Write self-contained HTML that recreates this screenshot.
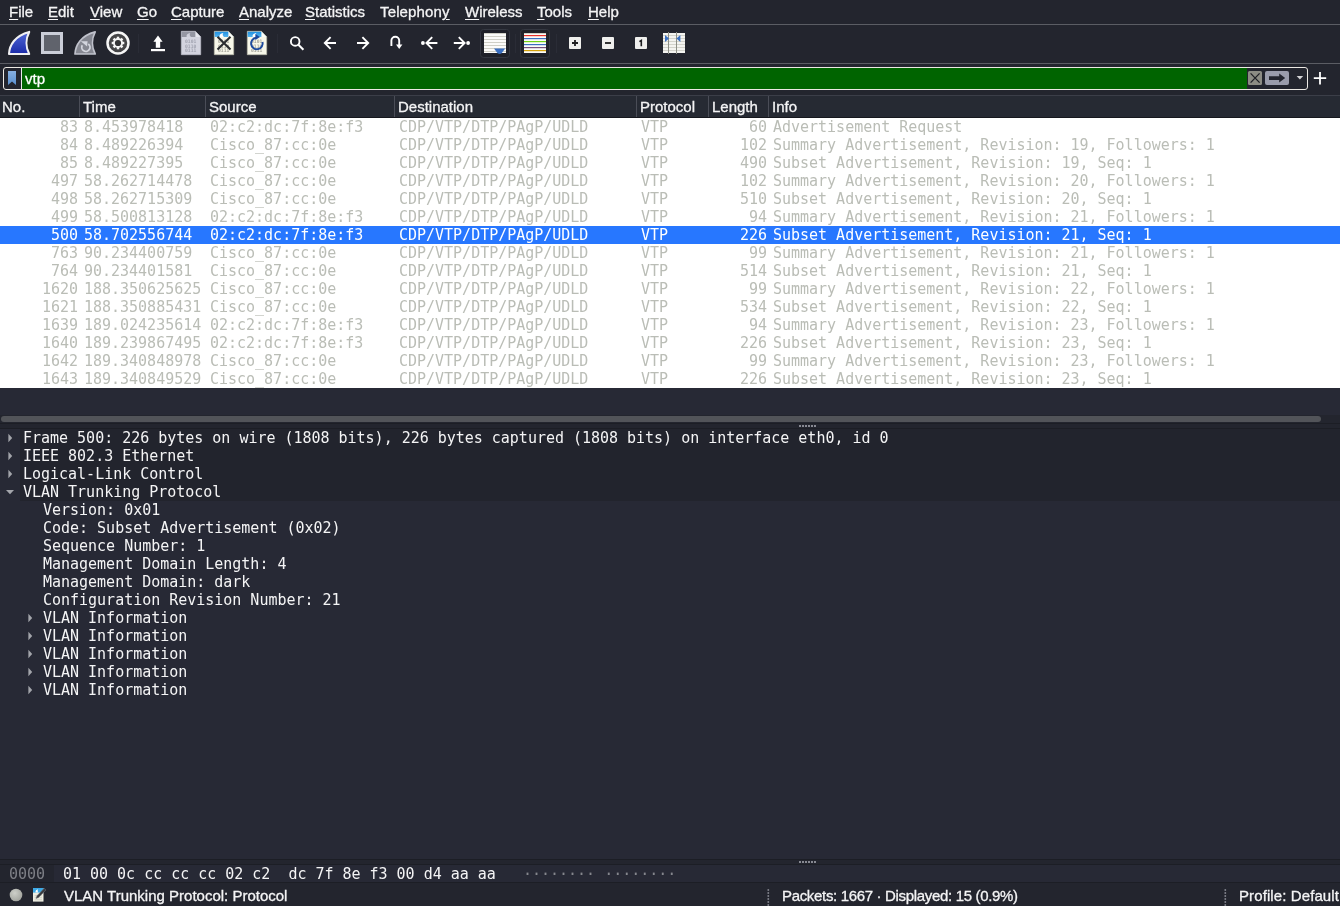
<!DOCTYPE html>
<html lang="en">
<head>
<meta charset="utf-8">
<title>Wireshark</title>
<style>
*{box-sizing:border-box;margin:0;padding:0}
html,body{width:1340px;height:906px;overflow:hidden;background:#23252e}
body{position:relative;font-family:"Liberation Sans","DejaVu Sans",sans-serif;font-size:15px;color:#fff}
.abs{position:absolute}
.mi,#phead span,#status span,#filter .txt{-webkit-text-stroke:0.3px currentColor}
#menubar,#toolbar,#filter,#phead,#plist,#tree,#hex,#status{will-change:transform}
#menubar{position:absolute;left:0;top:0;width:1340px;height:24px;background:#23252e}
.mi{position:absolute;top:3px;line-height:18px;font-size:15px;color:#f4f4f5;white-space:pre}
.mi u{text-decoration:underline;text-underline-offset:2px;text-decoration-thickness:1.4px}
.hl{position:absolute;left:0;width:1340px;height:1px;background:#5b5d64}
#toolbar{position:absolute;left:0;top:25px;width:1340px;height:38px}
#toolbar svg{position:absolute}
#filter{position:absolute;left:3px;top:67px;width:1305px;height:23px;border:1px solid #ece9e4;border-radius:3px;background:#23252e;overflow:hidden}
#filter .green{position:absolute;left:18px;top:0;width:1225px;height:21px;background:#006400}
#filter .vsep{position:absolute;left:17px;top:0;width:1px;height:21px;background:#e9e9ea}
#filter .txt{position:absolute;left:21px;top:1px;line-height:19px;font-size:15px;color:#fff}
#phead{position:absolute;left:0;top:95px;width:1340px;height:23px;background:#262a33;border-top:1px solid #3b3e48;border-bottom:1px solid #16181e}
#phead span{position:absolute;top:1px;line-height:19px;font-size:15px;color:#f4f4f5}
#phead i{position:absolute;top:0;width:1px;height:21px;background:#4a4d57}
#plist{position:absolute;left:0;top:118px;width:1340px;height:270px;background:#fff;overflow:hidden}
.mono{font-family:"DejaVu Sans Mono","Liberation Mono",monospace;font-size:15px;letter-spacing:-0.015px}
.pr{position:absolute;left:0;width:1340px;height:18px;color:#babdb6}
.pr.sel{background:#2777ff;color:#fff}
.c{position:absolute;top:0;line-height:18px;white-space:pre}
.no{right:1262px}.tm{left:84px}.src{left:210px}.dst{left:399px}.pro{left:641px}.len{right:573px}.inf{left:773px}
#gap{position:absolute;left:0;top:388px;width:1340px;height:40px;background:#272935}
#hscroll{position:absolute;left:0;top:415px;width:1340px;height:13px;background:#23252e}
#hscroll b{position:absolute;left:0;top:8px;width:1340px;height:1px;background:#1c1e25}
#hscroll i{position:absolute;left:1px;top:1px;width:1320px;height:6px;border-radius:3px;background:#525459}
#tree{position:absolute;left:0;top:428px;width:1340px;height:432px;border-bottom:1px solid #1c1e25;background:#272935;overflow:hidden;border-top:1px solid #1c1e25}
.tr{position:absolute;left:0;width:1340px;height:18px}
.tr .pbg{position:absolute;left:20px;top:0;width:1320px;height:18px;background:#22242d}
.tt{position:absolute;top:0;line-height:18px;white-space:pre;color:#f4f4f5}
.ar{position:absolute;top:4px}
#hex{position:absolute;left:0;top:864px;width:1340px;height:19px;background:#272935;border-top:1px solid #1c1e25;border-bottom:1px solid #1c1e25}
#hex i{position:absolute;left:0;top:0;width:54px;height:17px;background:#23252e}
#hex span{position:absolute;top:0;line-height:19px;white-space:pre}
#status{position:absolute;left:0;top:884px;width:1340px;height:22px;background:#23252e}
#status span{position:absolute;top:2px;line-height:20px;font-size:15px;color:#f4f4f5;white-space:pre}
</style>
</head>
<body>
<div id="menubar"><span class="mi" style="left:9px"><u>F</u>ile</span><span class="mi" style="left:48px"><u>E</u>dit</span><span class="mi" style="left:90px"><u>V</u>iew</span><span class="mi" style="left:137px"><u>G</u>o</span><span class="mi" style="left:171px"><u>C</u>apture</span><span class="mi" style="left:239px"><u>A</u>nalyze</span><span class="mi" style="left:305px"><u>S</u>tatistics</span><span class="mi" style="left:380px;letter-spacing:0.15px">Telephon<u>y</u></span><span class="mi" style="left:465px"><u>W</u>ireless</span><span class="mi" style="left:537px"><u>T</u>ools</span><span class="mi" style="left:588px"><u>H</u>elp</span></div>
<div class="hl" style="top:24px"></div>
<div id="toolbar">
<svg style="left:0;top:0" width="1340" height="38" viewBox="0 25 1340 38">
<defs>
<linearGradient id="gfin" x1="0" y1="0" x2="0" y2="1"><stop offset="0" stop-color="#5068d8"/><stop offset="1" stop-color="#1a2aa8"/></linearGradient>
<linearGradient id="gbm" x1="0" y1="0" x2="0" y2="1"><stop offset="0" stop-color="#86afe0"/><stop offset="1" stop-color="#5a90cf"/></linearGradient>
<linearGradient id="gband" x1="0" y1="0" x2="0" y2="1"><stop offset="0" stop-color="#1f90e2"/><stop offset="1" stop-color="#55b4ee"/></linearGradient>
</defs>
<!-- separators -->
<g fill="#2a2c36"><rect x="138" y="34" width="1" height="19"/><rect x="277" y="34" width="1" height="19"/><rect x="515" y="34" width="1" height="19"/><rect x="556" y="34" width="1" height="19"/></g>
<!-- start capture fin -->
<path d="M9 54 C9.4 45 15 35.6 29.2 31.9 C25.6 38.8 25.7 47.4 29.2 54 Z" fill="url(#gfin)" stroke="#f0f0f3" stroke-width="2.1" stroke-linejoin="round"/>
<!-- stop -->
<rect x="42.5" y="33.5" width="19" height="19" fill="#60636c" stroke="#cbced8" stroke-width="3"/>
<!-- restart fin -->
<path d="M75 54 C75.4 45 81 35.6 95.2 31.9 C91.6 38.8 91.7 47.4 95.2 54 Z" fill="#858791" stroke="#c0c2cc" stroke-width="1.7" stroke-linejoin="round"/>
<path d="M88.3 44 A4.1 4.1 0 1 1 82.3 45.3" fill="none" stroke="#d3d5de" stroke-width="1.8"/>
<path d="M80.8 41.2 L87.6 41.2 L87.1 46.6 Z" fill="#d3d5de"/>
<!-- options -->
<circle cx="118" cy="43" r="10.5" fill="#454547" stroke="#f6f6f6" stroke-width="2.5"/>
<g fill="#f6f6f6" transform="translate(118 43)">
<circle r="4.9"/>
<g id="teeth"><rect x="-1.2" y="-6.3" width="2.4" height="12.6"/><rect x="-6.3" y="-1.2" width="12.6" height="2.4"/></g>
<use href="#teeth" transform="rotate(45)"/>
<circle r="3.1" fill="#343436"/>
</g>
<!-- open (upload) -->
<path d="M158 35.6 L162.6 41.8 L160.2 41.8 L160.2 47.8 L155.8 47.8 L155.8 41.8 L153.4 41.8 Z" fill="#fff"/>
<rect x="151" y="49" width="14" height="2.2" fill="#fff"/>
<!-- save (disabled) -->
<path d="M181.3 31.3 L195.4 31.3 L200.7 36.8 L200.7 54.7 L181.3 54.7 Z" fill="#d3d4df" stroke="#bfc0cc" stroke-width="0.7"/>
<path d="M181.7 31.7 L195.2 31.7 L200.3 36.9 L181.7 36.9 Z" fill="#9496a2"/>
<path d="M195.4 31.4 L200.6 36.9 L195.4 36.9 Z" fill="#e6e7ee"/>
<path d="M186.6 36.9 C186.2 34.6 187.6 33.4 190.4 33 C189.2 34.4 189.6 35.8 191 36.9 Z" fill="#cfd0db"/>
<g font-family="'DejaVu Sans Mono','Liberation Mono',monospace" font-size="4.7" fill="#a2a4b1" text-anchor="middle" font-weight="bold"><text x="190.7" y="43.4">0101</text><text x="190.7" y="47.7">0110</text><text x="190.7" y="52">0111</text></g>
<!-- close file -->
<path d="M214.3 31.3 L228.4 31.3 L233.7 36.8 L233.7 54.7 L214.3 54.7 Z" fill="#f7f7e9" stroke="#b9b9a9" stroke-width="0.7"/>
<path d="M214.7 31.7 L228.2 31.7 L233.3 36.9 L214.7 36.9 Z" fill="url(#gband)"/>
<path d="M228.4 31.4 L233.6 36.9 L228.4 36.9 Z" fill="#fdfdf6"/>
<path d="M219.6 36.9 C219.2 34.6 220.6 33.4 223.4 33 C222.2 34.4 222.6 35.8 224 36.9 Z" fill="#ffffff"/>
<g font-family="'DejaVu Sans Mono','Liberation Mono',monospace" font-size="4.7" fill="#a4a49a" text-anchor="middle" font-weight="bold"><text x="223.7" y="43.4">0101</text><text x="223.7" y="47.7">0110</text><text x="223.7" y="52">0111</text></g>
<path d="M217.5 36.7 L230.5 49.5 M230.5 36.7 L217.5 49.5" stroke="#2a2d30" stroke-width="2" fill="none"/>
<!-- reload file -->
<path d="M247.3 31.3 L261.4 31.3 L266.7 36.8 L266.7 54.7 L247.3 54.7 Z" fill="#f7f7e9" stroke="#b9b9a9" stroke-width="0.7"/>
<path d="M247.7 31.7 L261.2 31.7 L266.3 36.9 L247.7 36.9 Z" fill="url(#gband)"/>
<path d="M261.4 31.4 L266.6 36.9 L261.4 36.9 Z" fill="#fdfdf6"/>
<path d="M252.6 36.9 C252.2 34.6 253.6 33.4 256.4 33 C255.2 34.4 255.6 35.8 257 36.9 Z" fill="#ffffff"/>
<g font-family="'DejaVu Sans Mono','Liberation Mono',monospace" font-size="4.7" fill="#a4a49a" text-anchor="middle" font-weight="bold"><text x="256.7" y="43.4">0101</text><text x="256.7" y="47.7">0110</text><text x="256.7" y="52">0111</text></g>
<path d="M262.5 42 A5.8 5.8 0 1 1 256.2 37.7" fill="none" stroke="#1c4a9e" stroke-width="2"/>
<path d="M255.4 34 L260 37 L255.4 40 Z" fill="#1c4a9e"/>
<!-- find -->
<circle cx="295.2" cy="41.4" r="4.3" fill="none" stroke="#fff" stroke-width="1.9"/>
<path d="M298.4 44.8 L303.4 49.8" stroke="#fff" stroke-width="2" fill="none"/>
<!-- back -->
<path d="M336 43 L325.4 43 M330.6 37.2 L324.8 43 L330.6 48.8" stroke="#fff" stroke-width="1.9" fill="none"/>
<!-- forward -->
<path d="M357 43 L367.6 43 M362.4 37.2 L368.2 43 L362.4 48.8" stroke="#fff" stroke-width="1.9" fill="none"/>
<!-- goto -->
<path d="M391.4 46 L391.4 40.6 A3.9 3.9 0 0 1 399.2 40.6 L399.2 45.4" stroke="#fff" stroke-width="1.9" fill="none"/>
<path d="M396 44.4 L402.4 44.4 L399.2 48.9 Z" fill="#fff"/>
<!-- first -->
<circle cx="422.9" cy="43" r="1.9" fill="#fff"/>
<path d="M437.4 43 L427.2 43 M432.2 37.2 L426.4 43 L432.2 48.8" stroke="#fff" stroke-width="1.9" fill="none"/>
<!-- last -->
<circle cx="468.1" cy="43" r="1.9" fill="#fff"/>
<path d="M453.8 43 L463.8 43 M458.8 37.2 L464.6 43 L458.8 48.8" stroke="#fff" stroke-width="1.9" fill="none"/>
<!-- autoscroll (checked) -->
<rect x="480.5" y="29.5" width="29" height="28" rx="3" fill="#1f2129" stroke="#343741"/>
<rect x="484" y="33" width="22" height="20" fill="#fbfbf9"/>
<g fill="#cfcfc6"><rect x="484" y="33" width="22" height="1"/><rect x="484" y="36" width="22" height="1"/><rect x="484" y="39" width="22" height="1"/><rect x="484" y="42" width="22" height="1"/><rect x="484" y="45" width="22" height="1"/><rect x="484" y="48" width="22" height="1"/><rect x="484" y="51" width="22" height="1"/></g>
<path d="M494 48.6 L505.2 48.6 L501.6 53.2 Q499.6 54.6 497.6 53.2 Z" fill="#3a6fc0"/>
<!-- colorize (checked) -->
<rect x="520.5" y="29.5" width="29" height="28" rx="3" fill="#1f2129" stroke="#343741"/>
<rect x="524" y="33" width="22" height="20" fill="#fbfbf9"/>
<rect x="524" y="33" width="22" height="1" fill="#cfcfc6"/>
<rect x="524" y="35" width="22" height="1.2" fill="#e8322c"/>
<rect x="524" y="38" width="22" height="1.2" fill="#3a6fc0"/>
<rect x="524" y="41" width="22" height="1.2" fill="#73d216"/>
<rect x="524" y="44" width="22" height="1.2" fill="#3a6fc0"/>
<rect x="524" y="47" width="22" height="1.2" fill="#75507b"/>
<rect x="524" y="50" width="22" height="1.2" fill="#d4a20c"/>
<!-- zoom in -->
<rect x="569" y="37" width="12" height="12" rx="1" fill="#efefed"/>
<path d="M575 40 L575 46 M572 43 L578 43" stroke="#1d1d1f" stroke-width="1.8"/>
<!-- zoom out -->
<rect x="602" y="37" width="12" height="12" rx="1" fill="#efefed"/>
<path d="M605 43 L611 43" stroke="#1d1d1f" stroke-width="1.8"/>
<!-- zoom 1 -->
<rect x="635" y="37" width="12" height="12" rx="1" fill="#efefed"/>
<path d="M639.4 41.6 L641.3 40.4 L641.3 46.2" stroke="#1d1d1f" stroke-width="1.6" fill="none"/>
<!-- resize columns -->
<rect x="663" y="33" width="22" height="20" fill="#f4f4f0"/>
<g fill="#d3d3cb"><rect x="663" y="35" width="22" height="1"/><rect x="663" y="38" width="22" height="1"/><rect x="663" y="41" width="22" height="1"/><rect x="663" y="44" width="22" height="1"/><rect x="663" y="47" width="22" height="1"/><rect x="663" y="50" width="22" height="1"/></g>
<rect x="668" y="32" width="1" height="22" fill="#8d8f86"/><rect x="676" y="32" width="1" height="22" fill="#8d8f86"/>
<path d="M665 35 L669 38.5 L665 42 Z" fill="#3a6fc0"/><path d="M680.4 35 L676.4 38.5 L680.4 42 Z" fill="#3a6fc0"/>
</svg>

</div>
<div class="hl" style="top:63px"></div>
<div id="filter"><div class="green"></div><i class="vsep"></i><span class="txt">vtp</span>
<svg class="abs" style="left:0;top:0" width="1303" height="21" viewBox="4 68 1303 21">
<path d="M8 71 L16 71 L16 85 L12 81.4 L8 85 Z" fill="url(#gbm)"/>
<rect x="1248" y="71" width="14" height="14" rx="1.5" fill="#8c8c84"/>
<path d="M1250.6 73.4 L1259.6 82.6 M1259.6 73.4 L1250.6 82.6" stroke="#1f2026" stroke-width="1.3" fill="none"/>
<rect x="1265" y="71" width="24" height="14" rx="2" fill="#9a9cab"/>
<path d="M1269 76.2 L1279.2 76.2 L1279.2 73.6 L1285.2 78.1 L1279.2 82.6 L1279.2 80 L1269 80 Z" fill="#23252e"/>
<path d="M1296.6 76 L1303.2 76 L1299.9 79.6 Z" fill="#d4d4d6"/>
</svg></div>
<svg class="abs" style="left:1312px;top:70px" width="16" height="16" viewBox="1312 70 16 16"><path d="M1320 72 L1320 84.4 M1313.8 78.2 L1326.2 78.2" stroke="#fff" stroke-width="1.8" fill="none"/></svg>
<div id="phead">
<span style="left:2px">No.</span><i style="left:79px"></i>
<span style="left:83px">Time</span><i style="left:205px"></i>
<span style="left:209px">Source</span><i style="left:394px"></i>
<span style="left:398px">Destination</span><i style="left:636px"></i>
<span style="left:640px">Protocol</span><i style="left:708px"></i>
<span style="left:712px">Length</span><i style="left:768px"></i>
<span style="left:772px">Info</span>
</div>
<div id="plist" class="mono">
<div class="pr" style="top:0px"><span class="c no">83</span><span class="c tm">8.453978418</span><span class="c src">02:c2:dc:7f:8e:f3</span><span class="c dst">CDP/VTP/DTP/PAgP/UDLD</span><span class="c pro">VTP</span><span class="c len">60</span><span class="c inf">Advertisement Request</span></div>
<div class="pr" style="top:18px"><span class="c no">84</span><span class="c tm">8.489226394</span><span class="c src">Cisco_87:cc:0e</span><span class="c dst">CDP/VTP/DTP/PAgP/UDLD</span><span class="c pro">VTP</span><span class="c len">102</span><span class="c inf">Summary Advertisement, Revision: 19, Followers: 1</span></div>
<div class="pr" style="top:36px"><span class="c no">85</span><span class="c tm">8.489227395</span><span class="c src">Cisco_87:cc:0e</span><span class="c dst">CDP/VTP/DTP/PAgP/UDLD</span><span class="c pro">VTP</span><span class="c len">490</span><span class="c inf">Subset Advertisement, Revision: 19, Seq: 1</span></div>
<div class="pr" style="top:54px"><span class="c no">497</span><span class="c tm">58.262714478</span><span class="c src">Cisco_87:cc:0e</span><span class="c dst">CDP/VTP/DTP/PAgP/UDLD</span><span class="c pro">VTP</span><span class="c len">102</span><span class="c inf">Summary Advertisement, Revision: 20, Followers: 1</span></div>
<div class="pr" style="top:72px"><span class="c no">498</span><span class="c tm">58.262715309</span><span class="c src">Cisco_87:cc:0e</span><span class="c dst">CDP/VTP/DTP/PAgP/UDLD</span><span class="c pro">VTP</span><span class="c len">510</span><span class="c inf">Subset Advertisement, Revision: 20, Seq: 1</span></div>
<div class="pr" style="top:90px"><span class="c no">499</span><span class="c tm">58.500813128</span><span class="c src">02:c2:dc:7f:8e:f3</span><span class="c dst">CDP/VTP/DTP/PAgP/UDLD</span><span class="c pro">VTP</span><span class="c len">94</span><span class="c inf">Summary Advertisement, Revision: 21, Followers: 1</span></div>
<div class="pr sel" style="top:108px"><span class="c no">500</span><span class="c tm">58.702556744</span><span class="c src">02:c2:dc:7f:8e:f3</span><span class="c dst">CDP/VTP/DTP/PAgP/UDLD</span><span class="c pro">VTP</span><span class="c len">226</span><span class="c inf">Subset Advertisement, Revision: 21, Seq: 1</span></div>
<div class="pr" style="top:126px"><span class="c no">763</span><span class="c tm">90.234400759</span><span class="c src">Cisco_87:cc:0e</span><span class="c dst">CDP/VTP/DTP/PAgP/UDLD</span><span class="c pro">VTP</span><span class="c len">99</span><span class="c inf">Summary Advertisement, Revision: 21, Followers: 1</span></div>
<div class="pr" style="top:144px"><span class="c no">764</span><span class="c tm">90.234401581</span><span class="c src">Cisco_87:cc:0e</span><span class="c dst">CDP/VTP/DTP/PAgP/UDLD</span><span class="c pro">VTP</span><span class="c len">514</span><span class="c inf">Subset Advertisement, Revision: 21, Seq: 1</span></div>
<div class="pr" style="top:162px"><span class="c no">1620</span><span class="c tm">188.350625625</span><span class="c src">Cisco_87:cc:0e</span><span class="c dst">CDP/VTP/DTP/PAgP/UDLD</span><span class="c pro">VTP</span><span class="c len">99</span><span class="c inf">Summary Advertisement, Revision: 22, Followers: 1</span></div>
<div class="pr" style="top:180px"><span class="c no">1621</span><span class="c tm">188.350885431</span><span class="c src">Cisco_87:cc:0e</span><span class="c dst">CDP/VTP/DTP/PAgP/UDLD</span><span class="c pro">VTP</span><span class="c len">534</span><span class="c inf">Subset Advertisement, Revision: 22, Seq: 1</span></div>
<div class="pr" style="top:198px"><span class="c no">1639</span><span class="c tm">189.024235614</span><span class="c src">02:c2:dc:7f:8e:f3</span><span class="c dst">CDP/VTP/DTP/PAgP/UDLD</span><span class="c pro">VTP</span><span class="c len">94</span><span class="c inf">Summary Advertisement, Revision: 23, Followers: 1</span></div>
<div class="pr" style="top:216px"><span class="c no">1640</span><span class="c tm">189.239867495</span><span class="c src">02:c2:dc:7f:8e:f3</span><span class="c dst">CDP/VTP/DTP/PAgP/UDLD</span><span class="c pro">VTP</span><span class="c len">226</span><span class="c inf">Subset Advertisement, Revision: 23, Seq: 1</span></div>
<div class="pr" style="top:234px"><span class="c no">1642</span><span class="c tm">189.340848978</span><span class="c src">Cisco_87:cc:0e</span><span class="c dst">CDP/VTP/DTP/PAgP/UDLD</span><span class="c pro">VTP</span><span class="c len">99</span><span class="c inf">Summary Advertisement, Revision: 23, Followers: 1</span></div>
<div class="pr" style="top:252px"><span class="c no">1643</span><span class="c tm">189.340849529</span><span class="c src">Cisco_87:cc:0e</span><span class="c dst">CDP/VTP/DTP/PAgP/UDLD</span><span class="c pro">VTP</span><span class="c len">226</span><span class="c inf">Subset Advertisement, Revision: 23, Seq: 1</span></div>
</div>
<div id="gap"></div>
<div id="hscroll"><i></i><b></b></div>
<div id="tree" class="mono">
<div class="tr" style="top:0px"><i class="pbg"></i><svg class="ar" style="left:6px" width="8" height="10" viewBox="0 0 8 10"><path d="M2.4 0.8 L6.2 5 L2.4 9.2 Z" fill="#a3a5ab"/></svg><span class="tt" style="left:23px">Frame 500: 226 bytes on wire (1808 bits), 226 bytes captured (1808 bits) on interface eth0, id 0</span></div>
<div class="tr" style="top:18px"><i class="pbg"></i><svg class="ar" style="left:6px" width="8" height="10" viewBox="0 0 8 10"><path d="M2.4 0.8 L6.2 5 L2.4 9.2 Z" fill="#a3a5ab"/></svg><span class="tt" style="left:23px">IEEE 802.3 Ethernet</span></div>
<div class="tr" style="top:36px"><i class="pbg"></i><svg class="ar" style="left:6px" width="8" height="10" viewBox="0 0 8 10"><path d="M2.4 0.8 L6.2 5 L2.4 9.2 Z" fill="#a3a5ab"/></svg><span class="tt" style="left:23px">Logical-Link Control</span></div>
<div class="tr" style="top:54px"><i class="pbg"></i><svg class="ar" style="left:5px;top:5px" width="10" height="8" viewBox="0 0 10 8"><path d="M1 2 L9 2 L5 6.2 Z" fill="#a3a5ab"/></svg><span class="tt" style="left:23px">VLAN Trunking Protocol</span></div>
<div class="tr" style="top:72px"><span class="tt" style="left:43px">Version: 0x01</span></div>
<div class="tr" style="top:90px"><span class="tt" style="left:43px">Code: Subset Advertisement (0x02)</span></div>
<div class="tr" style="top:108px"><span class="tt" style="left:43px">Sequence Number: 1</span></div>
<div class="tr" style="top:126px"><span class="tt" style="left:43px">Management Domain Length: 4</span></div>
<div class="tr" style="top:144px"><span class="tt" style="left:43px">Management Domain: dark</span></div>
<div class="tr" style="top:162px"><span class="tt" style="left:43px">Configuration Revision Number: 21</span></div>
<div class="tr" style="top:180px"><svg class="ar" style="left:26px" width="8" height="10" viewBox="0 0 8 10"><path d="M2.4 0.8 L6.2 5 L2.4 9.2 Z" fill="#a3a5ab"/></svg><span class="tt" style="left:43px">VLAN Information</span></div>
<div class="tr" style="top:198px"><svg class="ar" style="left:26px" width="8" height="10" viewBox="0 0 8 10"><path d="M2.4 0.8 L6.2 5 L2.4 9.2 Z" fill="#a3a5ab"/></svg><span class="tt" style="left:43px">VLAN Information</span></div>
<div class="tr" style="top:216px"><svg class="ar" style="left:26px" width="8" height="10" viewBox="0 0 8 10"><path d="M2.4 0.8 L6.2 5 L2.4 9.2 Z" fill="#a3a5ab"/></svg><span class="tt" style="left:43px">VLAN Information</span></div>
<div class="tr" style="top:234px"><svg class="ar" style="left:26px" width="8" height="10" viewBox="0 0 8 10"><path d="M2.4 0.8 L6.2 5 L2.4 9.2 Z" fill="#a3a5ab"/></svg><span class="tt" style="left:43px">VLAN Information</span></div>
<div class="tr" style="top:252px"><svg class="ar" style="left:26px" width="8" height="10" viewBox="0 0 8 10"><path d="M2.4 0.8 L6.2 5 L2.4 9.2 Z" fill="#a3a5ab"/></svg><span class="tt" style="left:43px">VLAN Information</span></div>
</div>
<div id="hex" class="mono"><i></i><span style="left:9px;color:#7d7f86">0000</span><span style="left:63px;color:#f4f4f5">01 00 0c cc cc cc 02 c2  dc 7f 8e f3 00 d4 aa aa</span><span style="left:523px;color:#85878d">········ ········</span></div>
<svg class="abs" style="left:798px;top:424px" width="20" height="4" viewBox="0 0 20 4"><g fill="#878992"><rect x="1" y="1" width="2" height="2"/><rect x="4" y="1" width="2" height="2"/><rect x="7" y="1" width="2" height="2"/><rect x="10" y="1" width="2" height="2"/><rect x="13" y="1" width="2" height="2"/><rect x="16" y="1" width="2" height="2"/></g></svg>
<svg class="abs" style="left:798px;top:860px" width="20" height="4" viewBox="0 0 20 4"><g fill="#878992"><rect x="1" y="1" width="2" height="2"/><rect x="4" y="1" width="2" height="2"/><rect x="7" y="1" width="2" height="2"/><rect x="10" y="1" width="2" height="2"/><rect x="13" y="1" width="2" height="2"/><rect x="16" y="1" width="2" height="2"/></g></svg>
<div id="status">
<svg class="abs" style="left:0;top:0" width="1340" height="22" viewBox="0 884 1340 22">
<defs><radialGradient id="gled" cx="0.4" cy="0.35" r="0.7"><stop offset="0" stop-color="#cdcfc9"/><stop offset="1" stop-color="#a0a29c"/></radialGradient></defs>
<circle cx="16" cy="895" r="6.3" fill="url(#gled)"/>
<rect x="33" y="888" width="10.5" height="13.6" fill="#eeeee2"/>
<rect x="33" y="888" width="10.5" height="4.6" fill="#3daae6"/>
<path d="M35.5 892.6 C35.3 890.6 36.4 889.6 38 889.2 C37.4 890.4 37.6 891.6 38.4 892.6 Z" fill="#fff"/>
<rect x="34.6" y="895.4" width="7.4" height="0.8" fill="#c9c9bd"/><rect x="34.6" y="897.4" width="7.4" height="0.8" fill="#c9c9bd"/><rect x="34.6" y="899.4" width="7.4" height="0.8" fill="#c9c9bd"/>
<path d="M44.2 888.2 L46 890 L38.6 897.4 L36 898.4 L37 895.8 Z" fill="#3a3b3f" stroke="#6f7076" stroke-width="0.5"/>
<g fill="#777982"><rect x="767.5" y="889" width="1.6" height="2"/><rect x="767.5" y="892" width="1.6" height="2"/><rect x="767.5" y="895" width="1.6" height="2"/><rect x="767.5" y="898" width="1.6" height="2"/><rect x="767.5" y="901" width="1.6" height="2"/><rect x="767.5" y="904" width="1.6" height="2"/>
<rect x="1224.5" y="889" width="1.6" height="2"/><rect x="1224.5" y="892" width="1.6" height="2"/><rect x="1224.5" y="895" width="1.6" height="2"/><rect x="1224.5" y="898" width="1.6" height="2"/><rect x="1224.5" y="901" width="1.6" height="2"/><rect x="1224.5" y="904" width="1.6" height="2"/></g>
</svg>
<span style="left:64px">VLAN Trunking Protocol: Protocol</span>
<span style="left:782px;letter-spacing:-0.33px">Packets: 1667 · Displayed: 15 (0.9%)</span>
<span style="left:1239px;letter-spacing:0.1px">Profile: Default</span>
</div>
</body>
</html>
